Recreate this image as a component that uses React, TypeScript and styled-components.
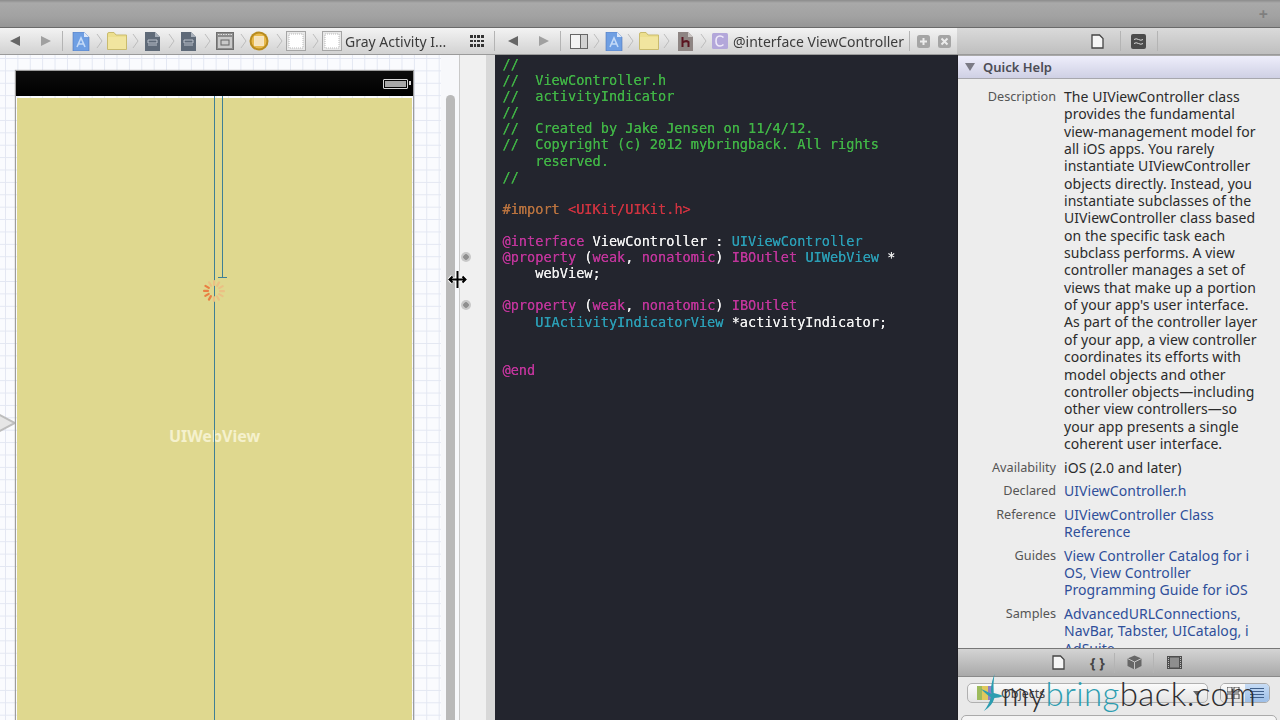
import { ReactNode } from "react";
import styled, { createGlobalStyle } from "styled-components";

const GlobalStyle = createGlobalStyle`
  html, body {
    margin: 0;
    padding: 0;
    background: #a0a0a0;
  }
`;

const Screen = styled.div`
  position: relative;
  width: 1280px;
  height: 720px;
  overflow: hidden;
  display: flex;
  flex-direction: column;
  font-family: "Noto Sans", "DejaVu Sans", sans-serif;
  filter: blur(0.45px);
`;

const TitleBar = styled.div`
  height: 28px;
  flex: none;
  display: flex;
  align-items: center;
  justify-content: flex-end;
  padding-right: 12px;
  box-sizing: border-box;
  background: linear-gradient(#8b8b8b 0, #a9a9a9 3px, #a2a2a2 60%, #959595 100%);
  border-bottom: 1px solid #6a6a6a;
  color: #7f7f7f;
  font-size: 16px;
  font-weight: 700;
`;

const Panes = styled.div`
  flex: 1;
  min-height: 0;
  display: flex;
`;

const Pane = styled.div<{ $w: number }>`
  width: ${(p) => p.$w}px;
  flex: none;
  display: flex;
  flex-direction: column;
  min-height: 0;
`;

const JumpBar = styled.div<{ $dim?: boolean }>`
  height: 27px;
  flex: none;
  display: flex;
  align-items: center;
  box-sizing: border-box;
  background: ${(p) =>
    p.$dim ? "linear-gradient(#dadada, #bfbfbf)" : "linear-gradient(#f3f3f3, #d2d2d2)"};
  border-bottom: 1px solid #9a9a9a;
`;

const Slot = styled.div<{ $ml: number }>`
  margin-left: ${(p) => p.$ml}px;
  display: flex;
  align-items: center;
  flex: none;
`;

const Divider = styled.div<{ $ml: number }>`
  margin-left: ${(p) => p.$ml}px;
  width: 1px;
  height: 20px;
  background: #b4b4b4;
  flex: none;
`;

const CrumbText = styled.span<{ $ml: number; $w: number }>`
  margin-left: ${(p) => p.$ml}px;
  width: ${(p) => p.$w}px;
  font-size: 14px;
  color: #3c3c3c;
  white-space: nowrap;
  flex: none;
`;

const CanvasRow = styled.div`
  flex: 1;
  min-height: 0;
  display: flex;
`;

const Canvas = styled.div`
  position: relative;
  flex: 1;
  padding: 16px 0 0 16px;
  background-color: #fafbfe;
  background-image: linear-gradient(#e3e7f2 1px, transparent 1px),
    linear-gradient(90deg, #e3e7f2 1px, transparent 1px);
  background-size: 12.4px 12.4px;
  background-position: 5px 3px;
`;

const Device = styled.div`
  position: relative;
  width: 397px;
  height: 700px;
  display: flex;
  flex-direction: column;
  box-shadow: 0 0 1px 1px #9d9d9d;
`;

const StatusBar = styled.div`
  height: 25px;
  flex: none;
  display: flex;
  align-items: center;
  justify-content: flex-end;
  padding-right: 5px;
  background: linear-gradient(#0c0c0c, #000);
`;

const Battery = styled.div`
  position: relative;
  width: 21px;
  height: 6px;
  padding: 1px;
  border: 1.5px solid #d8d8d8;
  border-radius: 1px;
  background: #a8a8a8 content-box;
  &::after {
    content: "";
    position: absolute;
    right: -4px;
    top: 1px;
    width: 2px;
    height: 4px;
    background: #d8d8d8;
  }
`;

const WebView = styled.div`
  flex: 1;
  margin: 2px 1px 0;
  background: #dfd88f;
  display: flex;
  justify-content: center;
  padding-top: 328px;
  color: #f5f1cd;
  font-size: 16px;
  font-weight: 700;
  line-height: 20px;
`;

const GuideLong = styled.div`
  position: absolute;
  left: 197.5px;
  top: 25px;
  bottom: 0;
  width: 1px;
  background: #3f7f95;
`;

const GuideShort = styled.div`
  position: absolute;
  left: 206px;
  top: 25px;
  height: 182px;
  width: 1px;
  background: #3f7f95;
  &::after {
    content: "";
    position: absolute;
    left: -4px;
    bottom: 0;
    width: 9px;
    height: 1px;
    background: #3f7f95;
  }
`;

const SpinnerHolder = styled.div`
  position: absolute;
  left: 185px;
  top: 207px;
  width: 26px;
  height: 26px;
`;

const SegueArrow = styled.div`
  position: absolute;
  left: -8px;
  top: 355px;
  width: 24px;
  height: 26px;
`;

const ScrollTrack = styled.div`
  width: 19px;
  flex: none;
  padding: 40px 4px 0 5px;
  box-sizing: border-box;
  background: #f7f8fb;
  border-right: 1px solid #c9c9c9;
`;

const ScrollThumb = styled.div`
  height: 100%;
  border-radius: 5px 5px 0 0;
  background: #b9b9b9;
`;

const Gutter = styled.div`
  width: 35px;
  flex: none;
  box-sizing: border-box;
  border-right: 9px solid #d8d8d8;
  background: #f0f0f0;
  display: flex;
  flex-direction: column;
  align-items: flex-start;
  padding: 197px 0 0 1px;
  gap: 38px;
`;

const OutletDot = styled.div`
  width: 10px;
  height: 10px;
  border-radius: 50%;
  background: radial-gradient(#8f8f8f 0 2.5px, #c8c8c8 3px);
`;

const Editor = styled.div`
  flex: 1;
  background: #23252e;
  padding: 1px 0 0 7.5px;
  font-family: "DejaVu Sans Mono", "Liberation Mono", monospace;
  font-size: 13.6px;
  line-height: 16.1px;
  white-space: pre;
  overflow: hidden;
`;

const CodeLine = styled.div`
  height: 16.1px;
`;

const tokenColors = {
  c: "#41b446",
  k: "#c0359b",
  w: "#f2f2f2",
  t: "#2b9fb6",
  p: "#b9733f",
  s: "#cf3340",
};

const Token = styled.span<{ $k: keyof typeof tokenColors }>`
  color: ${(p) => tokenColors[p.$k]};
  text-shadow: 0 0 0.6px ${(p) => tokenColors[p.$k]};
`;

const HelpPanel = styled.div`
  flex: 1;
  min-height: 0;
  display: flex;
  flex-direction: column;
  border-left: 1px solid #1f1f25;
  background: #ededed;
`;

const HelpHeader = styled.div`
  height: 24px;
  flex: none;
  display: flex;
  align-items: center;
  gap: 8px;
  padding-left: 7px;
  box-sizing: border-box;
  background: linear-gradient(#eeeefb, #cfd0e4);
  border-top: 1px solid #a9a9a9;
  border-bottom: 1px solid #a7a7ad;
  color: #4c4c55;
  font-size: 13px;
  font-weight: 600;
`;

const Triangle = styled.div`
  width: 0;
  height: 0;
  border-left: 5px solid transparent;
  border-right: 5px solid transparent;
  border-top: 8px solid #7b7b85;
`;

const HelpBody = styled.div`
  flex: 1;
  min-height: 0;
  overflow: hidden;
  padding-top: 9px;
  display: flex;
  flex-direction: column;
  gap: 6.3px;
`;

const HelpRow = styled.div`
  display: grid;
  grid-template-columns: 98px 1fr;
  column-gap: 8px;
  font-size: 14px;
  line-height: 17.35px;
`;

const HelpLabel = styled.div`
  text-align: right;
  color: #555;
  font-size: 12.7px;
  white-space: nowrap;
`;

const HelpValue = styled.div<{ $link?: boolean }>`
  color: ${(p) => (p.$link ? "#2f4f9a" : "#2b2b2b")};
  letter-spacing: 0.04px;
  white-space: nowrap;
`;

const LibraryBar = styled.div`
  height: 29px;
  flex: none;
  display: flex;
  align-items: center;
  box-sizing: border-box;
  background: linear-gradient(#d4d4d4, #a9a9a9);
  border-top: 1px solid #777;
  border-bottom: 1px solid #8a8a8a;
`;

const Braces = styled.span`
  font-size: 14px;
  font-weight: 700;
  color: #444;
`;

const LibraryFooter = styled.div`
  height: 43px;
  flex: none;
  box-sizing: border-box;
  padding: 6px 10px 0 9px;
  background: #e9e9e9;
  display: flex;
  gap: 12px;
  position: relative;
  &::after {
    content: "";
    position: absolute;
    left: 3px;
    right: 3px;
    top: 38px;
    height: 8px;
    border: 1px solid #aaa;
    border-radius: 5px 5px 0 0;
    background: #f5f5f5;
  }
`;

const SearchField = styled.div`
  width: 242px;
  height: 20px;
  box-sizing: border-box;
  display: flex;
  align-items: center;
  gap: 8px;
  padding: 0 6px 0 9px;
  border: 1px solid #b0b0b0;
  border-radius: 5px;
  background: linear-gradient(#fbfbfb, #e4e4e4);
  color: #444;
  font-size: 12.5px;
`;

const SearchLabel = styled.span`
  flex: 1;
`;

const ViewToggle = styled.div`
  width: 50px;
  height: 20px;
  box-sizing: border-box;
  display: grid;
  grid-template-columns: 1fr 1fr;
  border: 1px solid #a9a9a9;
  border-radius: 5px;
  overflow: hidden;
`;

const ToggleHalf = styled.div<{ $on?: boolean }>`
  display: flex;
  align-items: center;
  justify-content: center;
  background: ${(p) =>
    p.$on ? "linear-gradient(#c7dcf5, #9dbfe8)" : "linear-gradient(#fafafa, #e2e2e2)"};
`;

const Watermark = styled.div`
  position: absolute;
  left: 981px;
  top: 674px;
  display: flex;
  align-items: center;
  font-family: "Lato", "Noto Sans", sans-serif;
  font-weight: 300;
  font-size: 33px;
  line-height: 38px;
  color: #2e2e30;
  white-space: nowrap;
`;

const WatermarkName = styled.span`
  margin-left: -3px;
  letter-spacing: 0.4px;
`;

const WatermarkAccent = styled.span`
  color: #2c9db0;
`;

const CursorHolder = styled.div`
  position: absolute;
  left: 448px;
  top: 270px;
  width: 19px;
  height: 19px;
`;

const Back = () => (
  <svg width="12" height="12" viewBox="0 0 12 12">
    <path d="M1 6 L11 1 V11 Z" fill="#666" />
  </svg>
);

const Forward = () => (
  <svg width="12" height="12" viewBox="0 0 12 12">
    <path d="M11 6 L1 1 V11 Z" fill="#a0a0a0" />
  </svg>
);

const Chevron = () => (
  <svg width="7" height="16" viewBox="0 0 7 16">
    <path d="M1 1 L6 8 L1 15" fill="none" stroke="#bdbdbd" strokeWidth="1" />
  </svg>
);

const ProjectIcon = () => (
  <svg width="18" height="19" viewBox="0 0 18 19">
    <path d="M1 0 H12 L17 5 V19 H1 Z" fill="#6f9fe3" stroke="#4f77b8" strokeWidth="0.6" />
    <path d="M12 0 L17 5 H12 Z" fill="#dce8fa" />
    <path d="M5 15 L9 6 L13 15 M6.5 12 H11.5" fill="none" stroke="#c5dbf8" strokeWidth="1.6" />
  </svg>
);

const FolderIcon = () => (
  <svg width="20" height="18" viewBox="0 0 20 18">
    <path d="M0.5 2 Q0.5 0.5 2 0.5 H7 L9 3 H19.5 V17.5 H0.5 Z" fill="#ecdf8f" stroke="#c9bb6e" />
    <path d="M1 5 H19 V17 H1 Z" fill="#f1e59f" />
  </svg>
);

const DocIcon = () => (
  <svg width="15" height="19" viewBox="0 0 15 19">
    <path d="M0 0 H10 L15 5 V19 H0 Z" fill="#5f6a78" />
    <path d="M10 0 L15 5 H10 Z" fill="#a8b0ba" />
    <path d="M3 8 H12 V11 H3 Z M3 13 H12" fill="none" stroke="#c4cad2" strokeWidth="0.9" />
  </svg>
);

const SceneIcon = () => (
  <svg width="18" height="18" viewBox="0 0 18 18">
    <rect x="0.5" y="0.5" width="17" height="17" fill="#8b8b8b" stroke="#6f6f6f" />
    <rect x="2" y="5" width="14" height="11" fill="#c9c9c9" />
    <rect x="5" y="8" width="8" height="5" fill="none" stroke="#666" />
    <path d="M2 2.5 H16" stroke="#e0e0e0" strokeDasharray="1.5 1" />
  </svg>
);

const GoldIcon = () => (
  <svg width="20" height="20" viewBox="0 0 20 20">
    <circle cx="10" cy="10" r="9.5" fill="#b88b1f" />
    <circle cx="10" cy="10" r="7.5" fill="#e8b94a" />
    <rect x="5.5" y="5.5" width="9" height="9" fill="#f5e2bb" stroke="#fff" strokeDasharray="1 1" />
  </svg>
);

const ViewIcon = () => (
  <svg width="20" height="20" viewBox="0 0 20 20">
    <rect x="0.5" y="0.5" width="19" height="19" fill="#e8e8e8" stroke="#a5a5a5" />
    <rect x="3" y="3" width="14" height="14" fill="#fff" stroke="#bbb" strokeDasharray="1 1" />
  </svg>
);

const GridIcon = () => (
  <svg width="14" height="12" viewBox="0 0 14 12">
    <path
      d="M0 0h3v3H0z M4 0h2v3H4z M7 0h3v3H7z M11 0h3v3h-3z M0 5h3v2H0z M4 5h2v2H4z M7 5h3v2H7z M11 5h3v2h-3z M0 9h3v3H0z M4 9h2v3H4z M7 9h3v3H7z M11 9h3v3h-3z"
      fill="#333"
    />
  </svg>
);

const SplitIcon = () => (
  <svg width="18" height="15" viewBox="0 0 18 15">
    <rect x="0.5" y="0.5" width="17" height="14" fill="#f4f4f4" stroke="#666" />
    <path d="M10.5 0.5 V14.5" stroke="#666" />
    <rect x="11" y="1" width="6" height="13" fill="#d2d2d2" />
  </svg>
);

const HeaderIcon = () => (
  <svg width="15" height="19" viewBox="0 0 15 19">
    <path d="M0 0 H10 L15 5 V19 H0 Z" fill="#8e8583" />
    <path d="M10 0 L15 5 H10 Z" fill="#c9c4c2" />
    <path d="M4.5 5 V15 M4.5 10.5 Q8 8 10.5 10 V15" fill="none" stroke="#5a1420" strokeWidth="2" />
  </svg>
);

const ClassIcon = () => (
  <svg width="16" height="16" viewBox="0 0 16 16">
    <rect width="16" height="16" rx="1.5" fill="#b3a7da" />
    <path d="M11.5 4.5 Q10 3 8 3 Q4 3 4 8 Q4 13 8 13 Q10 13 11.5 11.5" fill="none" stroke="#efeaf9" strokeWidth="1.6" />
  </svg>
);

const SquareButton = ({ cross }: { cross?: boolean }) => (
  <svg width="13" height="13" viewBox="0 0 13 13">
    <rect width="13" height="13" rx="2.5" fill="#a5a5a5" />
    <path
      d={cross ? "M3.5 3.5 L9.5 9.5 M9.5 3.5 L3.5 9.5" : "M6.5 3 V10 M3 6.5 H10"}
      stroke="#ececec"
      strokeWidth="2"
    />
  </svg>
);

const FileTabIcon = () => (
  <svg width="13" height="15" viewBox="0 0 13 15">
    <path d="M1 1 H8.5 L12 4.5 V14 H1 Z" fill="#f6f6f6" stroke="#444" strokeWidth="1.3" />
  </svg>
);

const HelpTabIcon = () => (
  <svg width="15" height="15" viewBox="0 0 15 15">
    <rect width="15" height="15" rx="2" fill="#4b4b4b" />
    <path d="M3 5.5 Q5 4 7.5 5.5 T12 5.5 M3 9.5 Q5 8 7.5 9.5 T12 9.5" fill="none" stroke="#d8d8d8" />
  </svg>
);

const CubeIcon = () => (
  <svg width="15" height="15" viewBox="0 0 15 15">
    <path d="M7.5 0.5 L14.5 3.5 V11 L7.5 14.5 L0.5 11 V3.5 Z" fill="#666" />
    <path d="M0.5 3.5 L7.5 7 L14.5 3.5 M7.5 7 V14.5" fill="none" stroke="#c4c4c4" />
  </svg>
);

const FilmIcon = () => (
  <svg width="15" height="13" viewBox="0 0 15 13">
    <rect width="15" height="13" fill="#4d4d4d" />
    <rect x="3" y="1.5" width="9" height="10" fill="#8e8e8e" />
    <path d="M1.5 1 V12 M13.5 1 V12" stroke="#bbb" strokeDasharray="1 1" />
  </svg>
);

const LibraryFilterIcon = () => (
  <svg width="16" height="14" viewBox="0 0 16 14">
    <rect x="0" width="5" height="14" fill="#9dbb5c" />
    <rect x="5" width="6" height="14" fill="#e0c95e" />
    <rect x="11" width="5" height="14" fill="#8f7fc4" />
  </svg>
);

const DropDown = () => (
  <svg width="8" height="5" viewBox="0 0 8 5">
    <path d="M0 0 H8 L4 5 Z" fill="#666" />
  </svg>
);

const IconGrid = () => (
  <svg width="13" height="12" viewBox="0 0 13 12">
    <path d="M0 0h5v5H0z M7 0h5v5H7z M0 7h5v5H0z M7 7h5v5H7z" fill="none" stroke="#444" />
  </svg>
);

const IconList = () => (
  <svg width="14" height="12" viewBox="0 0 14 12">
    <path d="M0 1.5H14 M0 4.5H14 M0 7.5H14 M0 10.5H14" stroke="#3f5f8a" />
  </svg>
);

const Spinner = () => (
  <svg width="26" height="26" viewBox="0 0 26 26">
    {Array.from({ length: 12 }, (_, i) => (
      <rect
        key={i}
        x="12"
        y="2"
        width="2.2"
        height="6"
        rx="1"
        fill={i >= 7 && i <= 10 ? "#e97f42" : "#ebc084"}
        transform={`rotate(${i * 30} 13 13)`}
      />
    ))}
  </svg>
);

const ResizeCursor = () => (
  <svg width="19" height="19" viewBox="0 0 19 19">
    <path
      d="M9.5 1 V18 M1.5 9.5 H17.5 M4.5 6.5 L1.5 9.5 L4.5 12.5 M14.5 6.5 L17.5 9.5 L14.5 12.5"
      fill="none"
      stroke="#fff"
      strokeWidth="4"
    />
    <path
      d="M9.5 1 V18 M1.5 9.5 H17.5 M4.5 6.5 L1.5 9.5 L4.5 12.5 M14.5 6.5 L17.5 9.5 L14.5 12.5"
      fill="none"
      stroke="#000"
      strokeWidth="2"
    />
  </svg>
);

const SwooshLogo = () => (
  <svg width="24" height="38" viewBox="0 0 34 38" preserveAspectRatio="none">
    <path d="M19 0 Q12 14 15 20 Q8 17 0 15 Q10 22 14 23 Q12 30 4 37 Q16 32 19 24 Q25 24 32 22 Q24 20 18 19 Q17 10 19 0 Z" fill="#2c9db0" />
  </svg>
);

type Tok = [keyof typeof tokenColors, string];

const codeLines: Tok[][] = [
  [["c", "//"]],
  [["c", "//  ViewController.h"]],
  [["c", "//  activityIndicator"]],
  [["c", "//"]],
  [["c", "//  Created by Jake Jensen on 11/4/12."]],
  [["c", "//  Copyright (c) 2012 mybringback. All rights"]],
  [["c", "    reserved."]],
  [["c", "//"]],
  [],
  [["p", "#import "], ["s", "<UIKit/UIKit.h>"]],
  [],
  [["k", "@interface "], ["w", "ViewController : "], ["t", "UIViewController"]],
  [["k", "@property "], ["w", "("], ["k", "weak"], ["w", ", "], ["k", "nonatomic"], ["w", ") "], ["k", "IBOutlet "], ["t", "UIWebView "], ["w", "*"]],
  [["w", "    webView;"]],
  [],
  [["k", "@property "], ["w", "("], ["k", "weak"], ["w", ", "], ["k", "nonatomic"], ["w", ") "], ["k", "IBOutlet"]],
  [["t", "    UIActivityIndicatorView "], ["w", "*activityIndicator;"]],
  [],
  [],
  [["k", "@end"]],
];

const helpRows: { label: string; lines: string[]; link?: boolean }[] = [
  {
    label: "Description",
    lines: [
      "The UIViewController class",
      "provides the fundamental",
      "view-management model for",
      "all iOS apps. You rarely",
      "instantiate UIViewController",
      "objects directly. Instead, you",
      "instantiate subclasses of the",
      "UIViewController class based",
      "on the specific task each",
      "subclass performs. A view",
      "controller manages a set of",
      "views that make up a portion",
      "of your app's user interface.",
      "As part of the controller layer",
      "of your app, a view controller",
      "coordinates its efforts with",
      "model objects and other",
      "controller objects—including",
      "other view controllers—so",
      "your app presents a single",
      "coherent user interface.",
    ],
  },
  { label: "Availability", lines: ["iOS (2.0 and later)"] },
  { label: "Declared", lines: ["UIViewController.h"], link: true },
  { label: "Reference", lines: ["UIViewController Class", "Reference"], link: true },
  {
    label: "Guides",
    lines: ["View Controller Catalog for i", "OS, View Controller", "Programming Guide for iOS"],
    link: true,
  },
  {
    label: "Samples",
    lines: ["AdvancedURLConnections,", "NavBar, Tabster, UICatalog, i", "AdSuite"],
    link: true,
  },
];

const At = ({ ml, children }: { ml: number; children: ReactNode }) => (
  <Slot $ml={ml}>{children}</Slot>
);

const App = () => {
  return (
    <Screen>
      <GlobalStyle />
      <TitleBar>+</TitleBar>
      <Panes>
        <Pane $w={460}>
          <JumpBar>
            <At ml={9}><Back /></At>
            <At ml={19}><Forward /></At>
            <Divider $ml={10} />
            <At ml={9}><ProjectIcon /></At>
            <At ml={6}><Chevron /></At>
            <At ml={4}><FolderIcon /></At>
            <At ml={5}><Chevron /></At>
            <At ml={6}><DocIcon /></At>
            <At ml={8}><Chevron /></At>
            <At ml={6}><DocIcon /></At>
            <At ml={8}><Chevron /></At>
            <At ml={5}><SceneIcon /></At>
            <At ml={6}><Chevron /></At>
            <At ml={2}><GoldIcon /></At>
            <At ml={7}><Chevron /></At>
            <At ml={3}><ViewIcon /></At>
            <At ml={6}><Chevron /></At>
            <At ml={3}><ViewIcon /></At>
            <CrumbText $ml={3} $w={113}>Gray Activity I...</CrumbText>
          </JumpBar>
          <CanvasRow>
            <Canvas>
              <SegueArrow>
                <svg width="24" height="26" viewBox="0 0 24 26">
                  <path d="M0 1 L23 13 L0 25 Z" fill="#e6e6e6" stroke="#bdbdbd" strokeWidth="2" />
                </svg>
              </SegueArrow>
              <Device>
                <StatusBar>
                  <Battery />
                </StatusBar>
                <WebView>UIWebView</WebView>
                <GuideLong />
                <GuideShort />
                <SpinnerHolder>
                  <Spinner />
                </SpinnerHolder>
              </Device>
            </Canvas>
            <ScrollTrack>
              <ScrollThumb />
            </ScrollTrack>
          </CanvasRow>
        </Pane>
        <Pane $w={497}>
          <JumpBar>
            <At ml={10}><GridIcon /></At>
            <Divider $ml={10} />
            <At ml={12}><Back /></At>
            <At ml={19}><Forward /></At>
            <Divider $ml={10} />
            <At ml={9}><SplitIcon /></At>
            <At ml={5}><Chevron /></At>
            <At ml={5}><ProjectIcon /></At>
            <At ml={4}><Chevron /></At>
            <At ml={5}><FolderIcon /></At>
            <At ml={4}><Chevron /></At>
            <At ml={8}><HeaderIcon /></At>
            <At ml={7}><Chevron /></At>
            <At ml={5}><ClassIcon /></At>
            <CrumbText $ml={5} $w={171}>@interface ViewController</CrumbText>
            <Divider $ml={5} />
            <At ml={7}><SquareButton /></At>
            <At ml={8}><SquareButton cross /></At>
          </JumpBar>
          <CanvasRow>
            <Gutter>
              <OutletDot />
              <OutletDot />
            </Gutter>
            <Editor>
              {codeLines.map((line, i) => (
                <CodeLine key={i}>
                  {line.map(([k, text], j) => (
                    <Token key={j} $k={k}>{text}</Token>
                  ))}
                </CodeLine>
              ))}
            </Editor>
          </CanvasRow>
        </Pane>
        <Pane $w={323}>
          <JumpBar $dim>
            <At ml={134}><FileTabIcon /></At>
            <Divider $ml={16} />
            <At ml={10}><HelpTabIcon /></At>
            <Divider $ml={11} />
          </JumpBar>
          <HelpPanel>
            <HelpHeader>
              <Triangle />
              <span>Quick Help</span>
            </HelpHeader>
            <HelpBody>
              {helpRows.map((row) => (
                <HelpRow key={row.label}>
                  <HelpLabel>{row.label}</HelpLabel>
                  <HelpValue $link={row.link}>
                    {row.lines.map((l) => (
                      <div key={l}>{l}</div>
                    ))}
                  </HelpValue>
                </HelpRow>
              ))}
            </HelpBody>
            <LibraryBar>
              <At ml={94}><FileTabIcon /></At>
              <At ml={25}><Braces>{"{ }"}</Braces></At>
              <Divider $ml={9} />
              <At ml={12}><CubeIcon /></At>
              <Divider $ml={11} />
              <At ml={13}><FilmIcon /></At>
            </LibraryBar>
            <LibraryFooter>
              <SearchField>
                <LibraryFilterIcon />
                <SearchLabel>Objects</SearchLabel>
                <DropDown />
              </SearchField>
              <ViewToggle>
                <ToggleHalf><IconGrid /></ToggleHalf>
                <ToggleHalf $on><IconList /></ToggleHalf>
              </ViewToggle>
            </LibraryFooter>
          </HelpPanel>
        </Pane>
      </Panes>
      <CursorHolder>
        <ResizeCursor />
      </CursorHolder>
      <Watermark>
        <SwooshLogo />
        <WatermarkName>
          my<WatermarkAccent>bring</WatermarkAccent>back.com
        </WatermarkName>
      </Watermark>
    </Screen>
  );
};

export default App;
